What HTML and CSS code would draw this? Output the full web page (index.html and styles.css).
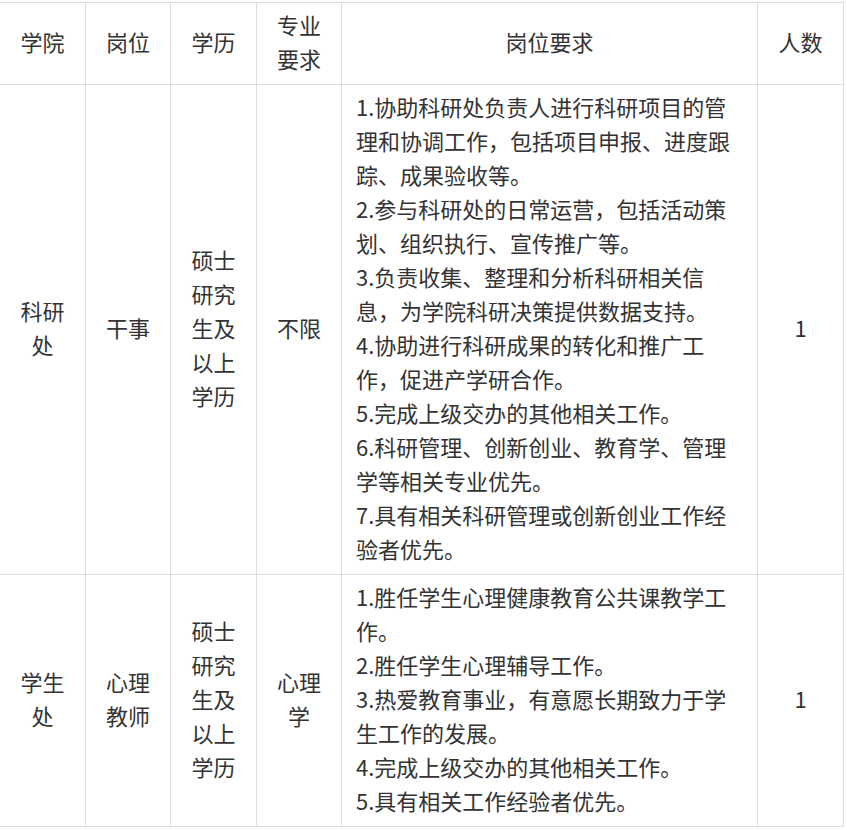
FILE: index.html
```html
<!DOCTYPE html>
<html lang="zh-CN">
<head>
<meta charset="utf-8">
<title>招聘岗位</title>
<link rel="stylesheet" href="styles.css">
</head>
<body>
<table class="jobs">
  <colgroup>
    <col class="c-narrow">
    <col class="c-narrow2">
    <col class="c-narrow">
    <col class="c-narrow2">
    <col class="c-wide">
    <col class="c-narrow">
  </colgroup>
  <thead>
    <tr class="head">
      <td>学院</td>
      <td>岗位</td>
      <td>学历</td>
      <td>专业要求</td>
      <td>岗位要求</td>
      <td>人数</td>
    </tr>
  </thead>
  <tbody>
    <tr>
      <td>科研处</td>
      <td>干事</td>
      <td>硕士研究生及以上学历</td>
      <td>不限</td>
      <td class="req">1.协助科研处负责人进行科研项目的管理和协调工作，包括项目申报、进度跟踪、成果验收等。<br>2.参与科研处的日常运营，包括活动策划、组织执行、宣传推广等。<br>3.负责收集、整理和分析科研相关信息，为学院科研决策提供数据支持。<br>4.协助进行科研成果的转化和推广工作，促进产学研合作。<br>5.完成上级交办的其他相关工作。<br>6.科研管理、创新创业、教育学、管理学等相关专业优先。<br>7.具有相关科研管理或创新创业工作经验者优先。</td>
      <td>1</td>
    </tr>
    <tr>
      <td>学生处</td>
      <td>心理教师</td>
      <td>硕士研究生及以上学历</td>
      <td>心理学</td>
      <td class="req">1.胜任学生心理健康教育公共课教学工作。<br>2.胜任学生心理辅导工作。<br>3.热爱教育事业，有意愿长期致力于学生工作的发展。<br>4.完成上级交办的其他相关工作。<br>5.具有相关工作经验者优先。</td>
      <td>1</td>
    </tr>
  </tbody>
</table>
</body>
</html>
```

FILE: styles.css
```css
html, body {
  margin: 0;
  padding: 0;
  background: #ffffff;
}

body {
  font-family: "Noto Sans CJK SC", "Noto Sans", sans-serif;
  font-size: 22px;
  line-height: 34px;
  color: #333333;
}

.jobs {
  border-collapse: collapse;
  table-layout: fixed;
  width: 844px;
  margin: 2px 0 0 -1px;
}

.c-narrow { width: 86px; }
.c-narrow2 { width: 85px; }
.c-wide { width: 416px; }

.jobs td {
  border: 1px solid #dddddd;
  padding: 4px 14px 9px;
  text-align: center;
  vertical-align: middle;
  word-break: break-all;
}

.jobs td.req {
  text-align: left;
}
```
